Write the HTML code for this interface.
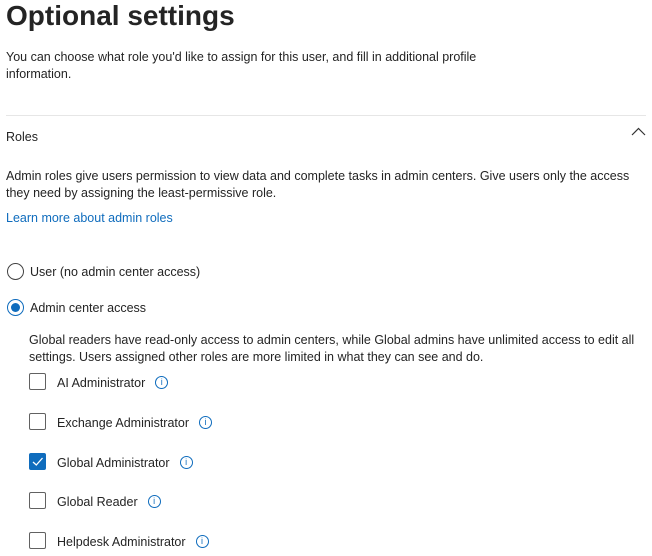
<!DOCTYPE html>
<html><head><style>
body{margin:0;width:652px;height:556px;overflow:hidden;background:#fff;font-family:"Liberation Sans",sans-serif;color:#242424;position:relative}
.a{position:absolute;white-space:nowrap;font-size:12.5px;line-height:17px}
h1{position:absolute;left:6px;top:-1px;margin:0;font-size:28px;line-height:34px;letter-spacing:0px;font-weight:bold;color:#242424}
.cb{position:absolute;left:29px;width:17px;height:17px;border:1px solid #616161;border-radius:2px;box-sizing:border-box}
.ck{background:#0f6cbd;border-color:#0f6cbd}
.inf{position:relative;top:-1px;display:inline-block;vertical-align:middle;margin-left:10px;width:13px;height:13px;border:1px solid #0f6cbd;border-radius:50%;box-sizing:border-box;color:#0f6cbd;font-size:9px;line-height:11px;text-align:center}
.rd{position:absolute;left:7px;width:17px;height:17px;border:1px solid #424242;border-radius:50%;box-sizing:border-box}
</style></head><body>
<h1>Optional settings</h1>
<div class="a" style="left:6px;top:49px">You can choose what role you'd like to assign for this user, and fill in additional profile</div>
<div class="a" style="left:6px;top:66px">information.</div>
<div style="position:absolute;left:6px;top:115px;width:640px;height:1px;background:#e6e6e6"></div>
<div class="a" style="left:6px;top:129px">Roles</div>
<svg style="position:absolute;left:631px;top:127px" width="16" height="10"><path d="M1 8 L7.5 1.5 L14 8" fill="none" stroke="#333" stroke-width="1.2"/></svg>
<div class="a" style="left:6px;top:168px">Admin roles give users permission to view data and complete tasks in admin centers. Give users only the access</div>
<div class="a" style="left:6px;top:185px">they need by assigning the least-permissive role.</div>
<div class="a" style="left:6px;top:210px;color:#0f6cbd">Learn more about admin roles</div>
<div class="rd" style="top:263px"></div>
<div class="a" style="left:30px;top:264px">User (no admin center access)</div>
<div class="rd" style="top:299px;border-color:#0f6cbd"><div style="position:absolute;left:3px;top:3px;width:9px;height:9px;border-radius:50%;background:#0f6cbd"></div></div>
<div class="a" style="left:30px;top:300px">Admin center access</div>
<div class="a" style="left:29px;top:332px">Global readers have read-only access to admin centers, while Global admins have unlimited access to edit all</div>
<div class="a" style="left:29px;top:349px">settings. Users assigned other roles are more limited in what they can see and do.</div>

<div class="cb" style="top:373px"></div><div class="a" style="left:57px;top:375px">AI Administrator<span class="inf">i</span></div>
<div class="cb" style="top:413px"></div><div class="a" style="left:57px;top:415px">Exchange Administrator<span class="inf">i</span></div>
<div class="cb ck" style="top:453px"><svg width="15" height="15" style="position:absolute;left:0;top:0"><path d="M3 8 L6.3 11 L12.5 4" fill="none" stroke="#fff" stroke-width="1.3"/></svg></div><div class="a" style="left:57px;top:455px">Global Administrator<span class="inf">i</span></div>
<div class="cb" style="top:492px"></div><div class="a" style="left:57px;top:494px">Global Reader<span class="inf">i</span></div>
<div class="cb" style="top:532px"></div><div class="a" style="left:57px;top:534px">Helpdesk Administrator<span class="inf">i</span></div>
</body></html>
